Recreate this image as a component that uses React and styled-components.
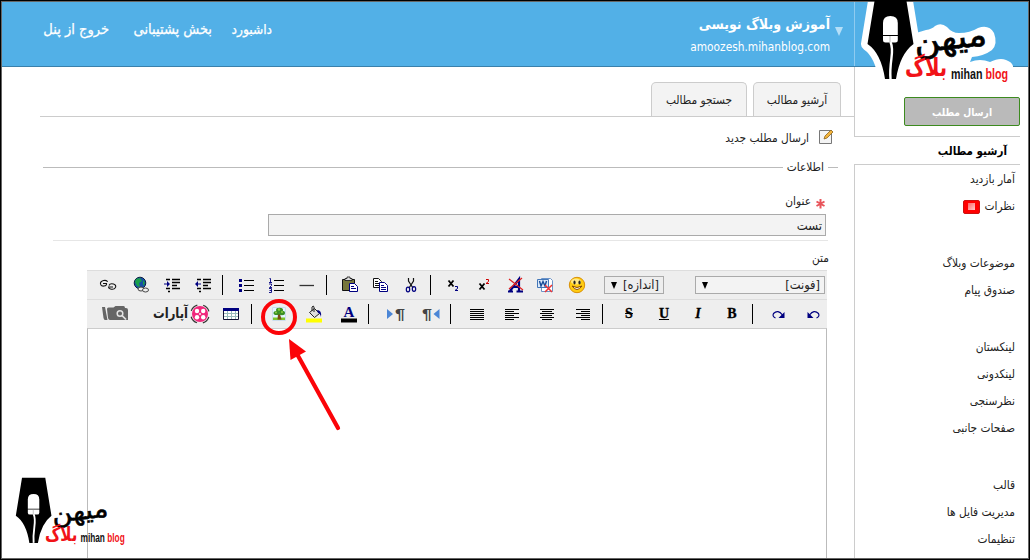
import React from "react";
import styled, { createGlobalStyle } from "styled-components";

const GlobalStyle = createGlobalStyle`
  * { box-sizing: border-box; }
  body { margin: 0; background: #fff; }
`;

const Frame = styled.div`
  position: relative;
  width: 1030px;
  height: 560px;
  overflow: hidden;
  border: 1px solid #000;
  padding: 1px;
  background: #fff;
  color: #222;
  font: 11.8px/16px "DejaVu Sans Condensed", "DejaVu Sans", sans-serif;
  display: flex;
  flex-direction: column;
  &::after {
    content: "";
    position: absolute;
    inset: 0;
    border: 1px solid rgba(0, 0, 0, 0.6);
  }
`;

const Header = styled.header`
  flex: none;
  height: 65px;
  background: #52b0e7;
  border-bottom: 1px solid #3a80ab;
  display: flex;
  color: #fff;
`;

const Nav = styled.nav`
  display: flex;
  gap: 19px;
  padding: 17px 0 0 41px;
`;

const NavLink = styled.a`
  width: ${(p) => p.$w}px;
  font-size: ${(p) => p.$size}px;
  line-height: 20px;
  white-space: nowrap;
  direction: rtl;
  text-align: right;
  -webkit-text-stroke: 0.25px #fff;
`;

const Account = styled.div`
  margin-left: auto;
  padding: 12px 11px 0 0;
  display: flex;
  gap: 5px;
`;

const BlogName = styled.div`
  text-align: right;
  font: bold 14px/21px "DejaVu Sans Condensed", "DejaVu Sans", sans-serif;
  direction: rtl;
`;

const BlogUrl = styled.div`
  font: 12px/24px "DejaVu Sans Condensed", sans-serif;
  font-size: 11.8px;
  text-align: right;
  direction: ltr;
`;

const Caret = styled.svg`
  display: block;
  margin-top: 13px;
`;

const HeaderEnd = styled.div`
  width: 174px;
  border-left: 1px solid #8fcbf0;
`;

const Body = styled.div`
  flex: 1;
  display: flex;
  min-height: 0;
`;

const Main = styled.main`
  width: 852px;
  display: flex;
  flex-direction: column;
`;

const Tabs = styled.div`
  flex: none;
  height: 50px;
  margin-left: 38px;
  padding-right: 13px;
  border-bottom: 1px solid #ccc;
  display: flex;
  justify-content: flex-end;
  align-items: flex-end;
  gap: 6px;
`;

const Tab = styled.div`
  width: ${(p) => p.$w}px;
  height: 34px;
  border: 1px solid #ccc;
  border-bottom: 0;
  border-radius: 5px 5px 0 0;
  background: #f3f3f3;
  text-align: center;
  line-height: 35px;
  direction: rtl;
`;

const Heading = styled.div`
  height: 40px;
  padding-right: 21px;
  display: flex;
  justify-content: flex-end;
  align-items: center;
  gap: 10px;
  span { direction: rtl; padding-top: 2px; }
`;

const Legend = styled.div`
  height: 20px;
  margin: 0 16px 0 41px;
  display: flex;
  align-items: center;
  gap: 4px;
  &::before { content: ""; flex: 1; border-top: 1px solid #bbb; }
  &::after { content: ""; width: 10px; border-top: 1px solid #bbb; }
  span { direction: rtl; }
`;

const FieldLabel = styled.div`
  height: ${(p) => p.$h}px;
  padding: ${(p) => p.$pad};
  display: flex;
  justify-content: flex-end;
  align-items: flex-end;
  gap: 5px;
  direction: ltr;
`;

const TitleInput = styled.div`
  flex: none;
  width: 558px;
  height: 22px;
  margin-left: 266px;
  border: 1px solid #aaa;
  background: #f3f3f3;
  padding-right: 3px;
  font-size: 13px;
  line-height: 21px;
  direction: rtl;
`;

const Divider = styled.div`
  flex: none;
  height: 5px;
  margin: 0 26px 0 51px;
  border-bottom: 1px solid #e6e6e6;
`;

const Editor = styled.section`
  width: 740px;
  margin-left: 85px;
  flex: 1;
  display: flex;
  flex-direction: column;
`;

const Toolbar = styled.div`
  flex: none;
  height: 29px;
  border-top: 1px solid #ddd;
  background: #eee;
  display: flex;
  align-items: center;
`;

const Tool = styled.div`
  flex: none;
  width: ${(p) => p.$w || 18}px;
  margin-left: ${(p) => p.$gap}px;
  display: flex;
  align-items: center;
  justify-content: center;
  svg { display: block; overflow: visible; }
`;

const Separator = styled.div`
  flex: none;
  width: 1px;
  height: 20px;
  margin-left: ${(p) => p.$gap}px;
  background: #000;
`;

const Letter = styled.span`
  font: bold 14px/18px "Liberation Serif", serif;
  color: #000;
  -webkit-text-stroke: 0.3px #000;
  font-style: ${(p) => (p.$italic ? "italic" : "normal")};
  text-decoration: ${(p) => p.$line || "none"};
`;

const Select = styled.div`
  flex: none;
  width: ${(p) => p.$w}px;
  height: 18px;
  margin-left: ${(p) => p.$gap}px;
  border: 1px solid #aaa;
  padding: 0 4px 0 6px;
  background: ${(p) => (p.$light ? "#f3f3f3" : "#eee")};
  display: flex;
  justify-content: space-between;
  align-items: center;
  font-size: 12.7px;
  span { direction: rtl; }
`;

const TextArea = styled.div`
  flex: 1;
  border: 1px solid #bbb;
  border-top-color: #ccc;
  border-bottom: 0;
`;

const Sidebar = styled.aside`
  width: 174px;
  display: flex;
  flex-direction: column;
`;

const SendBox = styled.div`
  flex: none;
  height: 69px;
  padding: 30px 8px 0 49px;
  border-left: 1px solid #ccc;
`;

const SendButton = styled.div`
  height: 29px;
  border: 1px solid #3c8a1f;
  border-radius: 2px;
  background: #bababa;
  color: #fff;
  font-size: 10.2px;
  font-weight: bold;
  text-align: center;
  line-height: 29px;
  direction: rtl;
`;

const ActiveItem = styled.div`
  flex: none;
  height: 29px;
  width: 166px;
  padding-right: 13px;
  border: solid #ccc;
  border-width: 1px 0;
  color: #000;
  font-size: 11.5px;
  font-weight: bold;
  line-height: 29px;
  direction: rtl;
`;

const Menu = styled.div`
  flex: 1;
  border-left: 1px solid #ccc;
  padding: 1px 13px 0 0;
  display: flex;
  flex-direction: column;
  gap: 30px;
  direction: rtl;
`;

const MenuItem = styled.div`
  height: 27px;
  line-height: 27px;
  display: flex;
  align-items: center;
  gap: 5px;
`;

const Badge = styled.i`
  width: 17px;
  height: 14px;
  border-radius: 2px;
  background: #f00;
  border: 1px solid #c11;
  display: flex;
  align-items: center;
  justify-content: center;
  &::before { content: ""; width: 7px; height: 7px; background: linear-gradient(135deg, #f66, #fcc); }
`;

const LogoSvg = styled.svg`
  position: absolute;
  left: ${(p) => p.$x}px;
  top: ${(p) => p.$y}px;
`;

const Marker = styled.svg`
  position: absolute;
  left: 254px;
  top: 292px;
`;

function Logo({ x, y, scale, outline }) {
  const nib = "M875.5 -5H905.5L913.5 44Q900 54 896 79H885Q881 53 867.5 44Z";
  return (
    <LogoSvg $x={x} $y={y} width={160 * scale} height={100 * scale} viewBox="860 -6 160 100">
      {outline && (
        <>
          <path d={nib} stroke="#fff" strokeWidth="13" strokeLinejoin="round" />
          <path
            d="M900 86V40L916 33L926 30Q932 29 935 26Q941 22 947 27Q952 33 959 33Q970 33 978 28Q989 24 994 33Q998 44 992 50Q984 56 972 57L970 62Q980 58 990 62Q1000 57 1006 60Q1012 62 1013 66V86Z"
            fill="#fff"
          />
        </>
      )}
      <path d={nib} fill="#000" />
      <path d="M883 35V23q0 -7 7.4 -7t7.4 7V35z" fill="#fff" />
      <path d="M883 36h14.8v4q0 2.500 -2.500 2.500h-9.800q-2.500 0 -2.500 -2.500z" fill="#fff" />
      <path d="M890 36v6" stroke="#999" strokeWidth=".7" />
      <path d="M890.500 42C895 52 889 60 890.500 79" fill="none" stroke="#fff" strokeWidth="2.400" />
      <text x="988" y="49" textAnchor="end" textLength="73" lengthAdjust="spacingAndGlyphs" transform="rotate(-6 950 50)" fontFamily="DejaVu Sans" fontSize="33" fill="#000" stroke="#000" strokeWidth=".7">میهن</text>
      <text x="947" y="76" textAnchor="end" textLength="42" lengthAdjust="spacingAndGlyphs" fontFamily="DejaVu Sans" fontWeight="bold" fontSize="25" fill="#f11318">بلاگ</text>
      <text x="951" y="78.500" textLength="57" lengthAdjust="spacingAndGlyphs" fontFamily="Liberation Sans Narrow, Liberation Sans" fontWeight="bold" fontSize="15.500" fill="#111">
        mihan <tspan fill="#f11318">blog</tspan>
      </text>
    </LogoSvg>
  );
}

const Svg = ({ w = 18, h = 18, children }) => (
  <svg width={w} height={h} viewBox={`0 0 ${w} ${h}`}>{children}</svg>
);

const Lines = ({ rows }) => (
  <Svg>
    {rows.map(([a, b], i) => (
      <path key={i} d={`M${a} ${4.5 + i * 2}H${b}`} stroke="#000" />
    ))}
  </Svg>
);

const LinkIcon = () => (
  <Svg>
    <g fill="none" stroke="#111" strokeWidth="1.100">
      <path d="M8.500 6Q8 3.800 4.500 4.500Q1 5.500 1.500 8Q2 10.500 5 10Q8 9.500 7.500 7.500H4" />
      <path d="M10 9.500Q11 7 14.500 8Q17.500 9 16.500 11.500Q15 14 11.500 13Q9.500 12.500 9.500 11H14" />
    </g>
  </Svg>
);

const GlobeIcon = () => (
  <Svg>
    <circle cx="8" cy="7" r="5.800" fill="#164fa6" stroke="#0b2040" />
    <path d="M4 3l4 -1 2 3 -3 2 1 4 -3 -1 -2 -4z M11 4l2 3 -2 3z" fill="#18a04a" />
    <g fill="#eee" stroke="#444"><ellipse cx="9" cy="13" rx="3" ry="2" /><ellipse cx="13.500" cy="14" rx="3" ry="2" /></g>
  </Svg>
);

const IndentIcon = ({ flip }) => (
  <Svg>
    <path d="M3 3.500H7M9 3.500H17M9 6.500H17M9 9.500H14M3 12.500H7M9 12.500H17M5 15.500H7" stroke="#000" strokeWidth="1.300" />
    <path d={flip ? "M1 8L4 5V7.500H7V8.500H4V11Z" : "M7 8L4 5V7.500H1V8.500H4V11Z"} fill="#000080" />
  </Svg>
);

const BulletsIcon = () => (
  <Svg>
    <path d="M7 4.500H17M7 9.500H17M7 14.500H17" stroke="#000" />
    <path d="M2 3h3v3h-3zM2 8h3v3h-3zM2 13h3v3h-3z" fill="#000080" />
  </Svg>
);

const NumbersIcon = () => (
  <Svg>
    <path d="M6 4.500H16M6 9.500H16M6 14.500H16" stroke="#000" />
    <path d="M1.500 2.500h1v4M1 6.500h3M1 8h2.500v1.500l-2 2h2.500M1 12.500h2.500v4h-2.500M1.500 14.500h2" fill="none" stroke="#000080" strokeWidth=".9" />
  </Svg>
);

const PasteIcon = () => (
  <Svg>
    <path d="M1.500 3.500h12v11h-12z" fill="#77773c" stroke="#111" />
    <path d="M4 4.500h7v-2h-2v-1.500h-3v1.500h-2z" fill="#ddd" stroke="#111" strokeWidth=".8" />
    <path d="M8.500 7.500h5l3 3v5h-8z" fill="#fff" stroke="#000080" />
    <path d="M10 10.500h3M10 12.500h5" stroke="#000080" />
  </Svg>
);

const CopyIcon = () => (
  <Svg>
    <path d="M2.500 2.500h5l3 3v6h-8z" fill="#fff" stroke="#111" />
    <path d="M4 5.500h3M4 7.500h4M4 9.500h4" stroke="#111" />
    <path d="M8.500 6.500h5l3 3v6h-8z" fill="#fff" stroke="#000080" />
    <path d="M10 9.500h3M10 11.500h5M10 13.500h5" stroke="#000080" />
  </Svg>
);

const CutIcon = () => (
  <Svg>
    <path d="M6.500 2V5L11 12M11.500 2V5L7 12" fill="none" stroke="#111" strokeWidth="1.200" />
    <g fill="none" stroke="#000080" strokeWidth="1.200"><ellipse cx="6" cy="13.500" rx="1.700" ry="2.300" /><ellipse cx="12" cy="13" rx="1.700" ry="2.300" /></g>
  </Svg>
);

const ScriptIcon = ({ up }) => (
  <Svg>
    <path d={up ? "M4.500 7.500l5 6M9.500 7.500l-5 6" : "M4.500 4.500l5 6M9.500 4.500l-5 6"} stroke="#000" strokeWidth="1.800" />
    <path d={up ? "M11 3.500h2.500v2l-2.500 2h3" : "M11 10.500h2.500v2l-2.500 2h3"} fill="none" stroke={up ? "#c00" : "#000080"} />
  </Svg>
);

const ClearIcon = () => (
  <Svg>
    <path d="M3 15L12 3V15M6.500 11H12M1 15.500H6M9.500 15.500H16" fill="none" stroke="#000080" strokeWidth="2.200" />
    <path d="M2 3L16 14M15 2L2 13" stroke="#e02020" strokeWidth="1.200" />
  </Svg>
);

const WordIcon = () => (
  <Svg>
    <path d="M5.500 2.500h9l2 2v11h-11z" fill="#fff" stroke="#6b93c8" />
    <path d="M1.500 3.500h11v8h-11z" fill="#dceafa" stroke="#4377b8" />
    <path d="M3.500 5l1.500 5 2 -4.500 2 4.500 1.500 -5" fill="none" stroke="#164b96" strokeWidth="1.400" />
    <path d="M9 9l7 7M16 9l-7 7" stroke="#e33" strokeWidth="1.500" />
  </Svg>
);

const SmileIcon = () => (
  <Svg>
    <circle cx="9" cy="9" r="7.700" fill="#fc1" stroke="#d99007" />
    <ellipse cx="8" cy="5.500" rx="5" ry="3" fill="#ffe987" />
    <ellipse cx="6.500" cy="6.500" rx="1.100" ry="2" fill="#222" /><ellipse cx="11.500" cy="6.500" rx="1.100" ry="2" fill="#222" />
    <path d="M4 10Q9 17 14 10Q9 13 4 10Z" fill="#fff" stroke="#8a4b00" />
  </Svg>
);

const FolderIcon = () => (
  <Svg w={26} h={18}>
    <path d="M0 2h3l2.500 13H3Q2 15 1.500 13zM5 4q0 -1.500 1.500 -1.500h5l2 -1.500h8q1.500 0 1.500 2h1q2 0 2 2V15H8q-1.500 0 -2 -2z" fill="#666" />
    <circle cx="18" cy="8.500" r="2.800" fill="none" stroke="#e4e4e4" strokeWidth="1.500" />
    <path d="M20 10.500l4 4" stroke="#e4e4e4" strokeWidth="1.700" />
  </Svg>
);

const AparatIcon = () => (
  <Svg w={58} h={20}>
    <text x="36" y="14" textAnchor="start" direction="rtl" textLength="35" lengthAdjust="spacingAndGlyphs" fontFamily="DejaVu Sans" fontWeight="bold" fontSize="14" fill="#222">آپارات</text>
    <circle cx="48" cy="10" r="9.300" fill="none" stroke="#333" strokeWidth="1.200" strokeDasharray="8.600 6" strokeDashoffset="-3" />
    <circle cx="48" cy="10" r="8" fill="#f0287c" />
    <g fill="#fff"><circle cx="45" cy="7" r="2.200" /><circle cx="51.200" cy="7" r="2.200" /><circle cx="45" cy="13.200" r="2.200" /><circle cx="51.200" cy="13.200" r="2.200" /><circle cx="48" cy="10" r=".9" /></g>
  </Svg>
);

const TableIcon = () => (
  <Svg>
    <path d="M1.500 3.500h15v11h-15z" fill="#fff" stroke="#113" />
    <path d="M1 3h16v3h-16z" fill="#000080" />
    <path d="M5.500 6V14M9.500 6V14M13.500 6V14M2 8.500H16M2 11.500H16" stroke="#9bb" />
  </Svg>
);

const TreeIcon = () => (
  <Svg>
    <path d="M2.500 2.500h13v13h-13z" fill="#e2f8ff" stroke="#cde" />
    <path d="M3 12.500h12v2.500h-12z" fill="#7cc52b" />
    <path d="M8 9h2l1.500 5.500h-4z" fill="#7a4b14" />
    <g fill="#3a8f24"><ellipse cx="6.500" cy="8" rx="3" ry="2" /><ellipse cx="9.500" cy="5" rx="3.500" ry="2.200" /><ellipse cx="12" cy="8" rx="3" ry="2.200" /></g>
    <g fill="#8fd13f"><circle cx="9" cy="4.500" r="1.200" /><circle cx="6" cy="7.500" r="1" /><circle cx="12" cy="7" r="1" /></g>
  </Svg>
);

const BucketIcon = () => (
  <Svg>
    <path d="M1 13.500h16v4h-16z" fill="#ff0" />
    <path d="M4.500 7.500l5 -4 5 5 -5 4z" fill="#ddd" stroke="#222" />
    <path d="M7 6V2q1.500 -2 2 0v5" fill="none" stroke="#222" />
    <path d="M12 5q5 0 4 7q-1 -4 -3 -4z" fill="#000080" />
  </Svg>
);

const ColorIcon = () => (
  <Svg>
    <text x="3.500" y="12" fontFamily="Liberation Serif" fontWeight="bold" fontSize="15" fill="#000080">A</text>
    <path d="M1 13.500h16v4h-16z" fill="#000" />
  </Svg>
);

const ParagraphIcon = ({ rtl }) => (
  <Svg>
    <text x={rtl ? 0 : 8} y="14" fontFamily="Liberation Sans" fontWeight="bold" fontSize="15" textLength="10" lengthAdjust="spacingAndGlyphs" fill="#444">¶</text>
    <path d={rtl ? "M17.500 4v10l-6 -5z" : "M0 4v10l6 -5z"} fill="#4b86d6" />
  </Svg>
);

const TurnIcon = ({ undo }) => (
  <Svg>
    <g transform={undo ? "matrix(-1 0 0 1 18 0)" : undefined}>
      <path d="M5.500 13Q2 11.500 3.500 8.500Q8 4 12.500 10" fill="none" stroke="#000080" strokeWidth="1.200" />
      <path d="M14.500 7V13H8.500z" fill="#000080" />
    </g>
  </Svg>
);

const PencilIcon = () => (
  <Svg w={14} h={16}>
    <path d="M.5 1.500h12v13H.5z" fill="#f4f4f4" stroke="#777" />
    <path d="M5 10l1 -3 6 -6 2 2 -6 6z" fill="#f3b43c" stroke="#8d651c" strokeWidth=".8" />
  </Svg>
);

const row = (a, b) => Array.from({ length: 6 }, (_, i) => (i % 2 ? b : a));

const topTools = [
  [12, <LinkIcon />], [15, <GlobeIcon />], [13, <IndentIcon />], [13, <IndentIcon flip />], [10],
  [14, <BulletsIcon />], [13, <NumbersIcon />],
  [12, <Svg><path d="M1.500 9.500H16" stroke="#333" strokeWidth="1.300" /></Svg>], [10],
  [14, <PasteIcon />], [12, <CopyIcon />], [13, <CutIcon />], [10],
  [13, <ScriptIcon />], [13, <ScriptIcon up />], [14, <ClearIcon />], [11, <WordIcon />], [14, <SmileIcon />],
];

const bottomTools = [
  [15, <FolderIcon />, 26], [24, <AparatIcon />, 58], [12, <TableIcon />], [11],
  [18, <TreeIcon />], [17, <BucketIcon />], [17, <ColorIcon />], [10],
  [18, <ParagraphIcon />], [17, <ParagraphIcon rtl />], [10],
  [17, <Lines rows={row([2, 16], [2, 16])} />], [17, <Lines rows={row([2, 16], [2, 11])} />],
  [17, <Lines rows={row([2, 16], [4, 14])} />], [18, <Lines rows={row([2, 16], [7, 16])} />], [10],
  [17, <Letter $line="line-through">S</Letter>], [17, <Letter $line="underline">U</Letter>],
  [16, <Letter $italic>I</Letter>], [16, <Letter>B</Letter>], [11],
  [17, <TurnIcon />], [16, <TurnIcon undo />],
];

const renderTools = (tools) =>
  tools.map(([gap, icon, w], i) =>
    icon ? <Tool key={i} $gap={gap} $w={w}>{icon}</Tool> : <Separator key={i} $gap={gap} />
  );

const Down = () => <svg width="6" height="7" viewBox="0 0 6 7"><path d="M0 0H6L3 7Z" fill="#000" /></svg>;

const menuGroups = [
  ["آمار بازدید", "نظرات"],
  ["موضوعات وبلاگ", "صندوق پیام"],
  ["لینکستان", "لینکدونی", "نظرسنجی", "صفحات جانبی"],
  ["قالب", "مدیریت فایل ها", "تنظیمات"],
];

export default function App() {
  return (
    <Frame>
      <GlobalStyle />
      <Header>
        <Nav>
          <NavLink $w={66} $size={14.5}>خروج از پنل</NavLink>
          <NavLink $w={84} $size={14.5}>بخش پشتیبانی</NavLink>
          <NavLink $w={41} $size={13.6}>داشبورد</NavLink>
        </Nav>
        <Account>
          <div>
            <BlogName>آموزش وبلاگ نویسی</BlogName>
            <BlogUrl>amoozesh.mihanblog.com</BlogUrl>
          </div>
          <Caret width="8" height="9" viewBox="0 0 8 9"><path d="M0 0H8L4 9Z" fill="#b5dff8" /></Caret>
        </Account>
        <HeaderEnd />
      </Header>
      <Body>
        <Main>
          <Tabs>
            <Tab $w={96}>جستجو مطالب</Tab>
            <Tab $w={88}>آرشیو مطالب</Tab>
          </Tabs>
          <Heading><span>ارسال مطلب جدید</span><PencilIcon /></Heading>
          <Legend><span>اطلاعات</span></Legend>
          <FieldLabel $h={37} $pad="0 29px 5px 0">
            <span>عنوان</span>
            <svg width="9" height="10" viewBox="0 0 9 10"><path d="M4.500 0V9.500M.5 2.500L8.500 7M8.500 2.500L.5 7" stroke="#e8545a" strokeWidth="2" /></svg>
          </FieldLabel>
          <TitleInput>تست</TitleInput>
          <Divider />
          <FieldLabel $h={29} $pad="0 25px 4px 0"><span>متن</span></FieldLabel>
          <Editor>
            <Toolbar>
              {renderTools(topTools)}
              <Select $gap={18} $w={60}><Down /><span>[اندازه]</span></Select>
              <Select $gap={31} $w={130} $light><Down /><span>[فونت]</span></Select>
            </Toolbar>
            <Toolbar>{renderTools(bottomTools)}</Toolbar>
            <TextArea />
          </Editor>
        </Main>
        <Sidebar>
          <SendBox><SendButton>ارسال مطلب</SendButton></SendBox>
          <ActiveItem>آرشیو مطالب</ActiveItem>
          <Menu>
            {menuGroups.map((group) => (
              <div key={group[0]}>
                {group.map((item) => (
                  <MenuItem key={item}>{item}{item === "نظرات" && <Badge />}</MenuItem>
                ))}
              </div>
            ))}
          </Menu>
        </Sidebar>
      </Body>
      <Logo x={859} y={-7} scale={1} outline />
      <Logo x={9} y={476} scale={0.775} />
      <Marker width="100" height="145" viewBox="255 293 100 145">
        <circle cx="279" cy="317" r="16" fill="none" stroke="#fb0408" strokeWidth="4" />
        <path d="M338 428L297 354" stroke="#fb0408" strokeWidth="4.200" strokeLinecap="round" />
        <path d="M289 339L306 351.500L290.500 360Z" fill="#fb0408" />
      </Marker>
    </Frame>
  );
}
